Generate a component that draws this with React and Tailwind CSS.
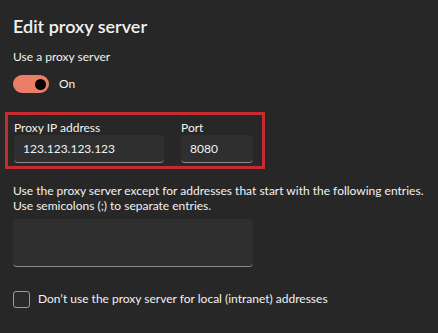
import { useState } from "react";

const App = () => {
  const [on, setOn] = useState(true);
  const [ip, setIp] = useState("123.123.123.123");
  const [port, setPort] = useState("8080");
  const [except, setExcept] = useState("");
  const [local, setLocal] = useState(false);

  return (
    <div
      className="w-[438px] h-[333px] bg-[#272727] text-[#f2f2f2] overflow-hidden"
      style={{ fontFamily: 'Lato, "Open Sans", sans-serif' }}
    >
      <div className="pl-[13px] pt-[14px]">
        {/* Title */}
        <h1 className="text-[18px] leading-[24px] font-semibold">Edit proxy server</h1>

        {/* Toggle */}
        <p className="mt-[11px] text-[12px] leading-[16px]">Use a proxy server</p>
        <div className="mt-[10px] flex items-center gap-[10px]">
          <button
            onClick={() => setOn(!on)}
            className={`w-[36px] h-[18px] rounded-full flex items-center px-[3px] ${
              on ? "bg-[#ec7d66] justify-end" : "bg-transparent border border-[#cfcfcf] justify-start"
            }`}
          >
            <span className={`w-[11px] h-[11px] rounded-full ${on ? "bg-black" : "bg-[#cfcfcf]"}`} />
          </button>
          <span className="text-[12px] leading-[16px]">{on ? "On" : "Off"}</span>
        </div>
      </div>

      {/* Highlighted address + port */}
      <div className="ml-[5px] mt-[19px] w-[260px] h-[57px] border-[3px] border-[#c42b30] flex gap-[17px] pl-[6px] pt-[5px]">
        <div className="flex flex-col">
          <label className="text-[12px] leading-[15px]">Proxy IP address</label>
          <input
            value={ip}
            onChange={(e) => setIp(e.target.value)}
            className="w-[150px] h-[28px] rounded-[4px] bg-[#2f2f2f] border-b border-[#8b8b8b] px-[9px] text-[12px] text-[#f2f2f2] outline-none"
          />
        </div>
        <div className="flex flex-col">
          <label className="text-[12px] leading-[15px]">Port</label>
          <input
            value={port}
            onChange={(e) => setPort(e.target.value)}
            className="w-[72px] h-[28px] rounded-[4px] bg-[#2f2f2f] border-b border-[#8b8b8b] px-[9px] text-[12px] text-[#f2f2f2] outline-none"
          />
        </div>
      </div>

      {/* Exceptions */}
      <div className="pl-[13px] mt-[14px]">
        <p className="text-[12px] leading-[15px] whitespace-nowrap">
          Use the proxy server except for addresses that start with the following entries.
          <br />
          Use semicolons (;) to separate entries.
        </p>
        <textarea
          value={except}
          onChange={(e) => setExcept(e.target.value)}
          className="mt-[6px] block w-[240px] h-[48px] rounded-[4px] bg-[#2f2f2f] border-b border-[#8b8b8b] px-[9px] py-[5px] text-[12px] text-[#f2f2f2] outline-none resize-none"
        />

        {/* Local addresses checkbox */}
        <label className="mt-[23px] flex items-center gap-[8px] cursor-pointer">
          <input
            type="checkbox"
            checked={local}
            onChange={(e) => setLocal(e.target.checked)}
            className="appearance-none w-[17px] h-[17px] rounded-[3px] border border-[#9a9a9a] bg-[#2a2a2a]"
          />
          <span className="text-[12px] leading-[18px]">
            Don’t use the proxy server for local (intranet) addresses
          </span>
        </label>
      </div>
    </div>
  );
};

export default App;
